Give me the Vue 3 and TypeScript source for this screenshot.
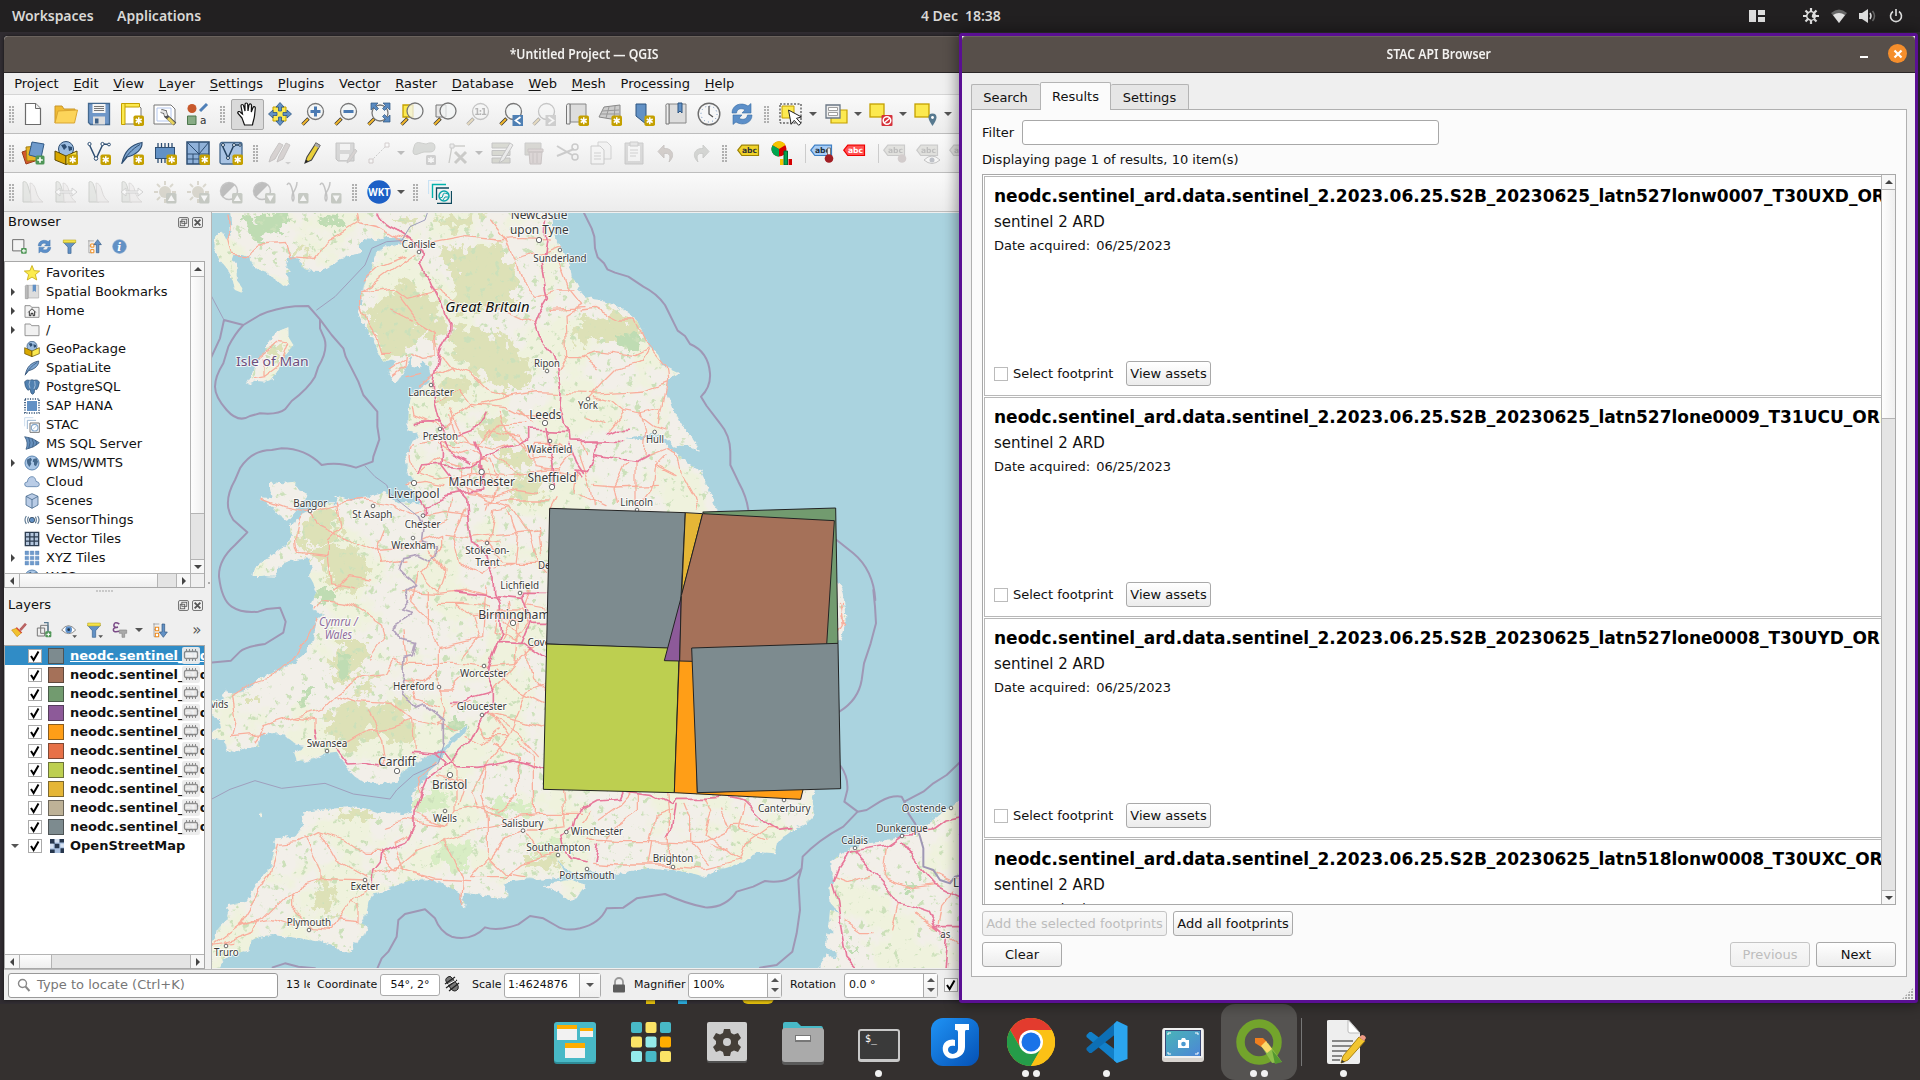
<script setup lang="ts">
interface Tool { k: 'icon' | 'handle' | 'arrow' | 'sep'; n?: string; off?: boolean; on?: boolean }
interface Place { t: string; x: number; y: number; w: number; s?: number; cx?: number; cy?: number; big?: boolean; cls?: string }

const star = '<rect x="13.5" y="13.500" width="10.500" height="10.500" rx="1.800" fill="#c4a000"/><path d="M18.750 15.300v7M15.700 17l6 3.500M21.700 17l-6 3.500" stroke="#fff" stroke-width="1.500"/>'
const lens = (x: number, y: number): string => `<path d="M1.500 22.500l6-6" stroke="#333" stroke-width="3.400"/><path d="M1.500 22.500l5.500-5.500" stroke="#f3b82c" stroke-width="2"/><circle cx="${x}" cy="${y}" r="8" fill="#f3f5f6" fill-opacity=".75" stroke="#777" stroke-width="1.300"/>`
const swirl = '<path d="M2 11C2 3 11-.5 18 4l3-2.500V11h-9l3-3.200C11 5.500 7 7 6.500 11z" fill="#5c8fc9" stroke="#3a6ea5" stroke-width=".6"/><path d="M22 13c0 8-9 11.500-16 7l-3 2.500V13h9l-3 3.200c4 2.300 8 .8 8.500-3.200z" fill="#5c8fc9" stroke="#3a6ea5" stroke-width=".6"/>'
const feather = '<path d="M2 22C4 12 9 4 22 1.500c.5 6-5 12-15 14.500z" fill="#7da5d0" stroke="#2e4e72" stroke-width="1.200"/><path d="M1.500 23C6 15 12 8 20 3.500" stroke="#2e4e72" fill="none"/>'
const geopkg = '<circle cx="12" cy="8" r="7.500" fill="#9bbce0" stroke="#2e4e72"/><path d="M7 4l4-1 2 3-3 3zM14 5l4 1v3l-3 1z" fill="#2e4e72"/><path d="M1 10l11 5v8.500L1 19z" fill="#d9a800" stroke="#5e4a00"/><path d="M23 10l-11 5v8.500L23 19z" fill="#fce94f" stroke="#5e4a00"/>'
const globe = '<circle cx="12" cy="12" r="10.500" fill="#a9c6e6" stroke="#4b78a8" stroke-width="1.300"/><path d="M4 7l6-3 2 3-2 3 1 3-3 5-3-5zM14 6l5-1 2 5-3 7-3-2v-4l-2-1z" fill="#45688c"/>'
const page = '<path d="M4.500 1.500h10l5 5v16h-15z" fill="#fff" stroke="#6b6b6b" stroke-width="1.200"/><path d="M14.500 1.500v5h5" fill="#eee" stroke="#6b6b6b"/>'
const pencil = '<path d="M4 22l2-6L15 2l4 2.500L10.500 19z" fill="#e9cf3a" stroke="#444" stroke-width="1.100"/><path d="M15 2l4 2.500-1.500 2.500-4-2.500z" fill="#aaa"/><path d="M4 22l1-3.300 2.500 1.500z" fill="#222"/>'
const hist = '<path d="M2 22V2q3-2 5 4l4 14 1 2z" fill="#ccd4c8" stroke="#8f9989"/><path d="M9 3q4 0 6 8t7 11H10z" fill="#e9e4e2" stroke="#b9b0ae"/>'
const mag = (up: boolean): string => `<rect x="13" y="13" width="10.500" height="10.500" rx="1.500" fill="#7b8d6d"/><path d="${up ? 'M18.250 15l3.500 6h-7z' : 'M18.250 21.500l3.500-6h-7z'}" fill="#fff"/>`
const tag = (f: string, s: string, c: string): string => `<path d="M.8 9.200l4-5h16.700v10.300H4.800z" fill="${f}" stroke="${s}" stroke-width="1.200"/><text x="5" y="12.300" font-family="DejaVu Sans" font-weight="bold" font-size="7.800" textLength="15" lengthAdjust="spacingAndGlyphs" fill="${c}">abc</text>`
const squareFlag = '<rect x="1" y="2" width="14" height="13" fill="#fce94f" stroke="#c4a000" stroke-width="1.300"/>'

const icons: Record<string, string> = {
  new: page,
  open: '<path d="M1 21V4h7l2 3h11v3" fill="#f0bb33" stroke="#c8962a"/><path d="M1 21L4 9l19.500-1-3 13z" fill="#fcd45a" stroke="#d9a531"/>',
  save: '<path d="M1.500 1.500h21v21h-19l-2-2z" fill="#6f97c8" stroke="#44698f" stroke-width="1.300"/><path d="M5.500 2h13v9h-13z" fill="#f4f4f4"/><path d="M7 4.500h10M7 6.500h10M7 8.500h10" stroke="#777"/><path d="M6 14.500h12v8H6z" fill="#dedede"/><path d="M8 16.500h3.500v5H8z" fill="#3c5f86"/>',
  layout: '<path d="M2 2h15l4 4v16H2z" fill="#fff" stroke="#777"/><path d="M5 1.500v21H1.500v-21h18v3.500H5" fill="#fce94f" stroke="#c4a000"/>' + star,
  manager: '<path d="M1 3h17l4 4v15H1z" fill="#fff" stroke="#777"/><path d="M4 6h14v13H4z" fill="none" stroke="#b4c7ee"/><path d="M8 9l4 1 1 4 9 8" stroke="#555" stroke-width="4" fill="none"/><path d="M8 9l4 1 1 4" stroke="#e6e6e6" stroke-width="2.600" fill="none"/><path d="M15 16l6 6" stroke="#e6d25f" stroke-width="3"/>',
  style: '<circle cx="6" cy="6.500" r="4.500" fill="#c8592c"/><path d="M14 9l7-7" stroke="#5080b8" stroke-width="3"/><path d="M1.500 14h8.500v8.500H1.500z" fill="#88ac86" stroke="#4c774c"/><text x="14" y="22" font-family="DejaVu Sans" font-size="10.500" fill="#333">a</text>',
  hand: '<path d="M7 16L3 11.500c-1-2 1.500-2.700 2.700-1L7.500 12 6 4c0-2 2.300-2 2.700 0L10 9V2.500c0-2 2.500-2 2.700 0L13 9l1-6c.3-1.800 2.500-1.500 2.500.3L16.300 10l1.700-4.500c.6-1.600 2.500-1 2.300.7L19.500 14c-.5 4-1.500 5-2 9H9.500z" fill="#fff" stroke="#111" stroke-width="1.200"/>',
  pan: '<path d="M5 5h13v14H5z" fill="#fce94f" stroke="#c4a000"/><path d="M12 .5l4 4.500h-2.500v4h-3V5H8zM12 23.500l4-4.500h-2.500v-4h-3v4H8zM.5 12L5 8v2.500h4v3H5V16zM23.500 12L19 8v2.500h-4v3h4V16z" fill="#6291c5" stroke="#2d5580" stroke-width=".8"/>',
  zin: lens(14.5, 9.5) + '<path d="M14.500 4.500v10M9.500 9.500h10" stroke="#4a7ab3" stroke-width="3"/>',
  zout: lens(14.5, 9.5) + '<path d="M9.500 9.500h10" stroke="#4a7ab3" stroke-width="3"/>',
  zfull: lens(13, 11) + '<path d="M4 1h7L8.500 3.500l3 3-2 2-3-3L4 8zM23 1h-7l2.500 2.500-3 3 2 2 3-3L23 8zM23 20h-7l2.500-2.500-3-3 2-2 3 3L23 13z" fill="#5a8ac0" stroke="#2d5580" stroke-width=".7"/>',
  zsel: '<path d="M3 3h10v12H3z" fill="#fce94f" stroke="#c4a000" stroke-width="1.300"/>' + lens(15, 9),
  zlay: '<path d="M3 3h10v12H3z" fill="#e8e8e8" stroke="#777"/>' + lens(15, 9),
  z11: lens(14.5, 9.5) + '<text x="8.300" y="13" font-family="DejaVu Sans" font-weight="bold" font-size="8.500" textLength="12.500" fill="#555">1:1</text>',
  zlast: lens(14.5, 9.5) + '<rect x="13.500" y="13" width="10.500" height="11" fill="#4f80b4"/><path d="M21.500 15l-5 3.500 5 3.500" stroke="#fff" stroke-width="1.700" fill="none"/>',
  znext: lens(14.5, 9.5) + '<rect x="13.500" y="13" width="10.500" height="11" fill="#999"/><path d="M16.500 15l5 3.500-5 3.500" stroke="#fff" stroke-width="1.700" fill="none"/>',
  newmap: '<path d="M5 2h16v18H5z" fill="#ddd" stroke="#888"/><path d="M5 2Q1 1 1.500 5v17H5z" fill="#eee" stroke="#777"/>' + star,
  new3d: '<path d="M1 15L6 5l16-2v13l-9 1z" fill="#ccc" stroke="#888"/><path d="M4 9l17-1M3 12l18 0M11 5l-3 11M17 4l-1 13" stroke="#999" fill="none"/>' + star,
  newbm: '<path d="M5 2h10v20l-5-4-5-4z" fill="#6291c5" stroke="#2d5580"/>' + star,
  showbm: '<path d="M5 2h17v19H5z" fill="#ddd" stroke="#888"/><path d="M5 2Q1 1 2 5v17H5z" fill="#eee" stroke="#777"/><path d="M14 1h4v10l-2-2-2 2z" fill="#6291c5" stroke="#2d5580"/>',
  clock: '<circle cx="12" cy="12" r="10.800" fill="#f7f7f7" stroke="#6d6d6d" stroke-width="1.400"/><circle cx="12" cy="12" r="8" fill="none" stroke="#6a8fbd" stroke-dasharray="1 3.200"/><path d="M12 4v8l4 3" stroke="#555" stroke-width="1.300" fill="none"/>',
  refresh: swirl,
  select: '<path d="M1 2h21v19H1z" fill="none" stroke="#222" stroke-dasharray="2 1.500"/><path d="M3 4h12v12H3z" fill="#fce94f" stroke="#c4a000"/><path d="M9.500 8l13 7-5 1.300 4.500 5-2.300 2-4.500-5-3 4z" fill="#fff" stroke="#222"/>',
  selval: '<path d="M7 8h16v13H7z" fill="#fce94f" stroke="#c4a000" stroke-width="1.200"/><path d="M2 3h14v13H2z" fill="#eee" stroke="#6b7785" stroke-width="1.300"/><path d="M4.500 5.500h9v3h-9zM4.500 10.500h9v3h-9z" fill="#fff" stroke="#888" stroke-width=".8"/>',
  desel: squareFlag + '<rect x="12.500" y="13" width="11" height="11" rx="1" fill="#d5313a"/><circle cx="18" cy="18.500" r="3.800" fill="none" stroke="#fff" stroke-width="1.500"/><path d="M15 21l6-5" stroke="#fff" stroke-width="1.500"/>',
  selloc: squareFlag + '<path d="M18.500 24q-4-6-4-8.500a4 4 0 018 0q0 2.500-4 8.500z" fill="#57798f"/><circle cx="18.500" cy="15.500" r="1.400" fill="#fff"/>',
  dsm: '<path d="M1 11l12-4 4 12-12 4z" fill="#d4582c" stroke="#9b3d1b"/><path d="M5 6l14-1v14l-13 1z" fill="#e8b427" stroke="#a27f12"/><path d="M11 1l12 2-3 14-12-3z" fill="#6f9acb" stroke="#315a87"/><rect x="14.500" y="14.500" width="9" height="9" rx="1.500" fill="#4f9657"/><path d="M19 16.300v5.500M16.300 19h5.500" stroke="#fff" stroke-width="1.600"/>',
  gpkg: geopkg + star,
  shp: '<path d="M2 3L9 18 16 3l6 .5" fill="none" stroke="#2e4e72" stroke-width="1.500"/><g fill="#fff" stroke="#2e4e72"><circle cx="2.500" cy="3" r="1.600"/><circle cx="9" cy="17.500" r="1.800"/><circle cx="15.500" cy="3" r="1.600"/><circle cx="22" cy="3.500" r="1.400"/></g>' + star,
  feather: feather + star,
  chip: '<path d="M5 2v20M8.500 2v20M12 2v20M15.500 2v20M19 2v20" stroke="#2e4e72" stroke-width="1.300"/><rect x="2.500" y="6.500" width="19" height="11" fill="#6291c5" stroke="#2e4e72"/>' + star,
  mesh: '<path d="M1 1h22v22H1z" fill="#8fb1d9" stroke="#2e4e72" stroke-width="1.500"/><path d="M1 13h22M13 1v22M1 1l12 12L23 1M7 13v10M1 18h12" stroke="#2e4e72" fill="none"/>' + star,
  vl: '<rect x="1" y="1.500" width="22" height="21.500" rx="2" fill="#a9c4e4" stroke="#45688c" stroke-width="1.300"/><path d="M3 4l6 13 6-13h6" fill="none" stroke="#23415f" stroke-width="1.500"/><g fill="#fff" stroke="#23415f"><circle cx="4" cy="4" r="1.500"/><circle cx="9" cy="17" r="1.500"/><circle cx="15" cy="4" r="1.500"/><circle cx="21" cy="4" r="1.300"/></g>' + star,
  pencils: '<path d="M1 21l2-6 8-13 4 2-8 14zM9 21l2-6 7-13 4 2-7 14z" fill="#b39c98" stroke="#847471"/><path d="M17 21h6l-3 2.500z" fill="#999"/>',
  pencil,
  savee: '<path d="M2 2h18v18H4l-2-2z" fill="#aaa" stroke="#777"/><path d="M6 3h10v6H6zM6 13h9v6H6z" fill="#eee"/><path d="M13 22l1-4 7-10 2 2-7 10z" fill="#b39c98" stroke="#888"/>',
  digit: '<path d="M4 20L20 4" stroke="#888" stroke-dasharray="2 1.500"/><path d="M2 18h4v4H2zM18 2h4v4h-4z" fill="#fff" stroke="#a88"/>',
  blob: '<path d="M2 6Q3 0 9 2t8 0q6-1 6 4t-5 5-6 0-6 2-5-3z" fill="#aab3a5" stroke="#8a9186"/><rect x="14" y="14" width="10" height="10" rx="1.500" fill="#999"/><path d="M19 16v6M16 17.500l6 3M22 17.500l-6 3" stroke="#fff" stroke-width="1.400"/>',
  vertex: '<path d="M4 22l3-17h13" fill="none" stroke="#8c8c80" stroke-width="1.300"/><path d="M5 3h4v4H5z" fill="#ddd" stroke="#888"/><path d="M10 11l11 11M21 11L10 22" stroke="#8c8c80" stroke-width="3"/>',
  attr: '<path d="M2 2h18v5H2zM2 9.500h18v5H2zM2 17h18v5H2z" fill="#aab08c" stroke="#777"/><path d="M9 22l2-5L20 2l3 2-9 15z" fill="#ddd" stroke="#777"/>',
  trash: '<path d="M2 2h16v12H2z" fill="#aaa890" stroke="#888"/><path d="M5 8h15v3H5zM6 11h13l-1 12H7z" fill="#c4a5a5" stroke="#947777"/><path d="M10 12v10M14 12v10" stroke="#947777"/>',
  cut: '<path d="M1 5l15 9M1 15l17-7" stroke="#8d8d8d" stroke-width="2"/><circle cx="19" cy="6" r="3" fill="none" stroke="#888" stroke-width="1.500"/><circle cx="19" cy="16" r="3" fill="none" stroke="#888" stroke-width="1.500"/>',
  copy: '<path d="M9 1h9l4 4v13H9z" fill="#eee" stroke="#999"/><path d="M2 5h9l4 4v14H2z" fill="#f6f6f6" stroke="#888"/><path d="M5 12h7M5 15h7M5 18h7" stroke="#999"/>',
  paste: '<path d="M3 2h18v21H3z" fill="#b0b0b0" stroke="#888"/><path d="M6 5h12v15H6z" fill="#f5f5f5"/><path d="M8 1h8v4H8z" fill="#ccc" stroke="#888"/><path d="M8 9h8M8 12h8M8 15h6" stroke="#999"/>',
  undo: '<path d="M9 4L3 10.500 9 17v-4.500c6-1 7 3 5 8.500 7-7 3-14-5-13.500z" fill="#a98f81" stroke="#8f7a70"/>',
  redo: '<path d="M15 4l6 6.500-6 6.500v-4.500c-6-1-7 3-5 8.500C3 14 7 7 15 7.500z" fill="#9fa59a" stroke="#888e85"/>',
  abc: tag('#f0d32a', '#9d8200', '#333'),
  abcr: tag('#ff5252', '#e00', '#fff'),
  abcg: tag('#c4c4b4', '#888', '#666'),
  abcb: tag('#a7cdf7', '#3d7fc4', '#234') + '<path d="M17.500 7h3v8h-3z" fill="#eee" stroke="#777"/><circle cx="19" cy="17.500" r="4.300" fill="#a11e24"/>',
  abcp: tag('#c4c4b4', '#888', '#666') + '<circle cx="19" cy="17.500" r="4.300" fill="#b09090"/>',
  abce: tag('#c4c4b4', '#888', '#666') + '<path d="M8 19q8-8 16 0-8 7-16 0z" fill="#fff" stroke="#777"/><circle cx="16" cy="19" r="2.500" fill="#679"/>',
  diag: '<circle cx="9" cy="8" r="7.500" fill="#d40000"/><path d="M9 8L2.500 4.200A7.500 7.500 0 0115.500 4z" fill="#f5c400"/><path d="M9 8v7.500A7.500 7.500 0 012.500 4.200z" fill="#00a650"/><path d="M10 18h3.500v6H10z" fill="#f5c400"/><path d="M14 10h3.500v14H14z" fill="#00a650" stroke="#063"/><path d="M18.500 18H22v6h-3.500z" fill="#d40000"/>',
  hist,
  hist2: hist + '<path d="M1 12l5-4v3h12V8l5 4-5 4v-3H6v3z" fill="#fff" stroke="#999"/>',
  sunu: '<circle cx="12" cy="12" r="6" fill="#b3a877"/><path d="M12 1v4M12 19v4M1 12h4M19 12h4M4 4l3 3M17 7l3-3M4 20l3-3" stroke="#b3a877" stroke-width="2"/>' + mag(true),
  sund: '<circle cx="12" cy="12" r="6" fill="#b3a877"/><path d="M12 1v4M12 19v4M1 12h4M19 12h4M4 4l3 3M17 7l3-3M4 20l3-3" stroke="#b3a877" stroke-width="2"/>' + mag(false),
  conu: '<circle cx="10" cy="11" r="8.500" fill="#eee" stroke="#777" stroke-width="1.500"/><path d="M4 17A8.500 8.500 0 0116 5z" fill="#666"/>' + mag(true),
  cond: '<circle cx="10" cy="11" r="8.500" fill="#eee" stroke="#777" stroke-width="1.500"/><path d="M4 17A8.500 8.500 0 0116 5z" fill="#666"/>' + mag(false),
  gamu: '<path d="M2 5q3-6 6 8 4-6 4-11M8 12q-2 7 0 9 2-2 0-9" fill="none" stroke="#777" stroke-width="1.500"/>' + mag(true),
  gamd: '<path d="M2 5q3-6 6 8 4-6 4-11M8 12q-2 7 0 9 2-2 0-9" fill="none" stroke="#777" stroke-width="1.500"/>' + mag(false),
  wkt: '<circle cx="12" cy="12" r="11.700" fill="#1c5fc6"/><text x="1.300" y="16" font-family="Open Sans" font-weight="bold" font-size="11" textLength="21.500" lengthAdjust="spacingAndGlyphs" fill="#fff">WKT</text>',
  stac: '<path d="M.5 14V.5H14" fill="none" stroke="#c9e2f4" stroke-width="1.200"/><path d="M4.500 18V4.500H18" fill="none" stroke="#00b2ac" stroke-width="1.400"/><path d="M8.500 20V8H21M9 23.500h14.500V11" fill="none" stroke="#0e4a5e" stroke-width="1.300"/><circle cx="16" cy="16" r="5" fill="none" stroke="#09a5a8" stroke-width="1.500"/><path d="M12 18q3 0 3-3t5-1M15 20l2-3h3" stroke="#09a5a8" fill="none"/>',
  addl: '<path d="M1 1h18v18H1z" fill="#f3f3f3" stroke="#666" stroke-width="1.500"/><rect x="14.500" y="14.500" width="9" height="9" rx="1.500" fill="#4f9657"/><path d="M19 16v6M16 19h6" stroke="#fff" stroke-width="1.700"/>',
  filter: '<path d="M2 5h20l-7.500 8v10h-5V13z" fill="#6291c5" stroke="#3a628e"/><path d="M2 1.500h20V6H2z" fill="#f5e34a" stroke="#b5a11b" stroke-width=".8"/>',
  collapse: '<path d="M2 3h9M3 2v20h5M3 11h5" stroke="#888" fill="none"/><path d="M6 8h5v5H6zM6 17h5v5H6z" fill="#fff" stroke="#ef8b1b" stroke-width="1.600"/><path d="M17 1l6 8h-4v13h-4V9h-4z" fill="#6291c5" stroke="#2d5580"/>',
  expand: '<path d="M2 3h9M3 2v20h5M3 11h5" stroke="#888" fill="none"/><path d="M5 8h5v5H5zM5 17h5v5H5z" fill="#fff" stroke="#ef8b1b" stroke-width="1.600"/><path d="M17 23l6-8h-4V3h-4v12h-4z" fill="#6291c5" stroke="#2d5580"/>',
  info: '<circle cx="12" cy="12" r="11" fill="#6291c5" stroke="#7da2cc"/><text x="8.500" y="18.500" font-family="DejaVu Serif" font-style="italic" font-weight="bold" font-size="17" fill="#fff">i</text>',
  brush: '<path d="M13 11l8-9 2 2-8 9z" fill="#b66" stroke="#a44"/><path d="M9 9l7 7-7 6L1 12z" fill="#f2c230" stroke="#c98f17"/><path d="M9 8l8 8-2 1-8-8z" fill="#d64c3b"/>',
  group: '<path d="M2 9h11v12H2zM7 5h11v12H7z" fill="none" stroke="#777" stroke-width="1.500"/><path d="M12 1h6v17" fill="none" stroke="#57798f" stroke-width="2"/><rect x="14" y="14" width="9" height="9" rx="1.500" fill="#4f9657"/><path d="M18.500 16v5.500M15.700 18.500h5.500" stroke="#fff" stroke-width="1.500"/>',
  eye: '<path d="M1 12q10-13 21 0-10 11-21 0z" fill="#fff" stroke="#777" stroke-width="1.300"/><circle cx="11.500" cy="11.500" r="5" fill="#5c8fc9"/><circle cx="11.500" cy="11.500" r="2" fill="#234"/><path d="M17 20h7l-3.500 4z" fill="#555"/>',
  filterd: '<path d="M1 5h19l-7 8v10H8V13z" fill="#6291c5" stroke="#3a628e"/><path d="M1 1.500h19V6H1z" fill="#f5e34a" stroke="#b5a11b" stroke-width=".8"/><path d="M17 20h7l-3.500 4z" fill="#555"/>',
  eps: '<path d="M11 3Q4-1 3 4t6 4Q2 8 2 12t9 2" fill="none" stroke="#7a4a86" stroke-width="2.300"/><path d="M11 12h11v5h-3v6h-4v-6h-4z" fill="#aaa" stroke="#888"/>',
  starf: '<path d="M12 .8l3.200 7.700 8.300.6-6.400 5.300 2 8.100-7.100-4.400-7.100 4.400 2-8.100L.5 9.100l8.300-.6z" fill="#fcec4d" stroke="#c9ad12" stroke-width="1.300"/>',
  bm: '<path d="M6 2h16v19H6z" fill="#ddd" stroke="#aaa"/><path d="M6 2Q1 1 2 5v17h4z" fill="#bbb" stroke="#999"/><path d="M13 1h5v11l-2.500-2L13 12z" fill="#6291c5"/>',
  home: '<path d="M1.500 21.500V4h8l2 2.500h11v15z" fill="#f3f3f3" stroke="#777" stroke-width="1.200"/><path d="M6.500 14L12 8.500l5.500 5.500M8 13v6h2.500v-3.500h3V19H16v-6" fill="none" stroke="#222" stroke-width="1.400"/>',
  folder: '<path d="M1.500 20.500V3h8l2 2.500h11v15z" fill="#f1f1f1" stroke="#888" stroke-width="1.300"/>',
  gpk: geopkg, spl: feather, globe,
  pg: '<path d="M1 4q3-4 8-2 3-2 6 0 6-2 8 3-1 8-4 11l-3-1q0 8-3 8t-4-8q-3 3-4 1Q1 12 1 4z" fill="#5080b0" stroke="#2e4e72"/><path d="M9 2q-3 6 0 12M16 3q2 7-1 12" fill="none" stroke="#c8d8ea"/>',
  hana: '<path d="M1.500 1.500h21v21h-21z" fill="none" stroke="#2e4e72" stroke-width="2.500" stroke-dasharray="1.700 2"/><path d="M4.500 4.500h15v15h-15z" fill="#6291c5"/>',
  stc: '<path d="M1 14V1h13" fill="none" stroke="#cde" stroke-width="1.500"/><path d="M5 18V5h13" fill="none" stroke="#9ab5d0" stroke-width="1.500"/><path d="M9 9h14v14H9z" fill="none" stroke="#777" stroke-width="1.500"/><circle cx="16" cy="16" r="5" fill="none" stroke="#87a9cc" stroke-width="1.700"/><path d="M13 19l6-6" stroke="#87a9cc"/>',
  ms: '<path d="M1 1q12 1 22 9-7 7-20 10Q7 10 1 1z" fill="#6690bd" stroke="#2e4e72"/><path d="M7 2q4 8 0 17M12 4q4 6 1 13M17 6q3 4 1 8" fill="none" stroke="#2e4e72"/>',
  cloud: '<path d="M5 19q-4 0-4-4 0-3 4-3 1-8 7-8 5 0 6 7 5 1 5 4.500T19 19z" fill="#b9cce6" stroke="#5b7fa8" stroke-width="1.200"/>',
  cube: '<path d="M12 1l9 4v13l-9 5-9-5V5z" fill="#b9cce6" stroke="#45688c" stroke-width="1.200"/><path d="M3 5l9 5 9-5M12 10v13" fill="none" stroke="#45688c" stroke-width="1.200"/>',
  sensor: '<circle cx="12" cy="12" r="4" fill="#6291c5" stroke="#234"/><path d="M7 7q-3 5 0 10M3.500 6q-4 6 0 12M17 7q3 5 0 10M20.500 6q4 6 0 12" fill="none" stroke="#5b7791" stroke-width="1.700"/>',
  vt: '<path d="M2 2h20v20H2z" fill="#b4c6dd" stroke="#2e3e52" stroke-width="2"/><path d="M2 8.700h20M2 15.300h20M8.700 2v20M15.300 2v20" stroke="#2e3e52" stroke-width="2"/>',
  xyz: '<path d="M1.500 1.500h5.500V7H1.500zM9.300 1.500h5.500V7H9.300zM17 1.500h5.500V7H17zM1.500 9.300H7v5.500H1.500zM9.300 9.300h5.500v5.500H9.300zM17 9.300h5.500v5.500H17zM1.500 17H7v5.500H1.500zM9.300 17h5.500v5.500H9.300zM17 17h5.500v5.500H17z" fill="#6f9acb" stroke="#5383b8" stroke-width=".5"/>',
}

const I = (...n: string[]): Tool[] => n.map(x => ({ k: 'icon' as const, n: x }))
const D = (...n: string[]): Tool[] => n.map(x => ({ k: 'icon' as const, n: x, off: true }))
const H: Tool = { k: 'handle' }
const A: Tool = { k: 'arrow' }
const AD: Tool = { k: 'arrow', off: true }
const S: Tool = { k: 'sep' }
const toolbars: Tool[][] = [
  [H, ...I('new', 'open', 'save', 'layout', 'manager', 'style'), H, { k: 'icon', n: 'hand', on: true }, ...I('pan', 'zin', 'zout', 'zfull', 'zsel', 'zlay'), ...D('z11'), ...I('zlast'), ...D('znext'), ...I('newmap', 'new3d', 'newbm', 'showbm', 'clock', 'refresh'), H, ...I('select'), A, ...I('selval'), A, ...I('desel'), A, ...I('selloc'), A],
  [H, ...I('dsm', 'gpkg', 'shp', 'feather', 'chip', 'mesh', 'vl'), H, ...D('pencils'), ...I('pencil'), ...D('savee', 'digit'), AD, ...D('blob', 'vertex'), AD, ...D('attr', 'trash', 'cut', 'copy', 'paste', 'undo', 'redo'), H, ...I('abc', 'diag'), S, ...I('abcb', 'abcr'), S, ...D('abcp', 'abce', 'abcg')],
  [H, ...D('hist', 'hist2', 'hist', 'hist2', 'sunu', 'sund', 'conu', 'cond', 'gamu', 'gamd'), H, ...I('wkt'), A, H, ...I('stac')],
]

const menus: [string, string, string][] = [['Pro', 'j', 'ect'], ['', 'E', 'dit'], ['', 'V', 'iew'], ['', 'L', 'ayer'], ['', 'S', 'ettings'], ['', 'P', 'lugins'], ['Vect', 'o', 'r'], ['', 'R', 'aster'], ['', 'D', 'atabase'], ['', 'W', 'eb'], ['', 'M', 'esh'], ['Pro', 'c', 'essing'], ['', 'H', 'elp']]

const tree: { t: string; i: string; e?: boolean }[] = [
  { t: 'Favorites', i: 'starf' }, { t: 'Spatial Bookmarks', i: 'bm', e: true }, { t: 'Home', i: 'home', e: true }, { t: '/', i: 'folder', e: true },
  { t: 'GeoPackage', i: 'gpk' }, { t: 'SpatiaLite', i: 'spl' }, { t: 'PostgreSQL', i: 'pg' }, { t: 'SAP HANA', i: 'hana' }, { t: 'STAC', i: 'stc' },
  { t: 'MS SQL Server', i: 'ms' }, { t: 'WMS/WMTS', i: 'globe', e: true }, { t: 'Cloud', i: 'cloud' }, { t: 'Scenes', i: 'cube' },
  { t: 'SensorThings', i: 'sensor' }, { t: 'Vector Tiles', i: 'vt' }, { t: 'XYZ Tiles', i: 'xyz', e: true }, { t: 'WCS', i: 'globe' },
]
const layers = ['#7d8b8f', '#a57159', '#729b6f', '#8d5a99', '#ff9e17', '#e77148', '#bdcf50', '#e5b636', '#beb297', '#7d8b8f']

const results = ['latn527lonw0007_T30UXD', 'latn527lone0009_T31UCU', 'latn527lone0008_T30UYD', 'latn518lonw0008_T30UXC']

const land = [
  'M75 0L80 60 65 90 50 65 30 80 28 115 45 150 70 180 85 215 90 240 110 248 112 235 95 210 95 170 80 150 85 135 110 135 130 140 145 165 165 180 185 185 200 200 215 210 235 228 250 222 250 205 245 190 255 180 240 160 250 140 265 140 285 148 290 175 320 182 350 183 380 165 400 150 440 135 465 130 465 100 480 85 520 88 545 80 585 85 600 88 600 98 580 105 545 110 515 125 505 145 500 180 480 220 468 245 470 285 455 305 470 335 490 365 510 395 520 430 535 455 560 448 575 455 555 475 550 490 570 522 580 510 600 480 615 440 620 450 620 470 640 475 655 455 675 475 680 500 670 520 640 540 620 555 612 590 610 660 635 670 640 680 620 700 600 740 610 785 625 810 605 822 620 840 640 868 652 880 610 880 580 880 550 860 540 845 480 862 440 870 415 865 390 855 400 880 360 880 320 900 290 915 275 935 255 945 258 990 230 1015 180 1050 150 1075 145 1098 180 1098 210 1100 215 1080 240 1060 270 1050 310 1045 315 1060 325 1075 312 1095 325 1120 335 1145 325 1165 318 1180 335 1212 360 1210 335 1230 325 1290 300 1330 270 1355 230 1375 190 1395 160 1405 140 1430 105 1445 80 1452 60 1442 52 1460 60 1475 15 1470 15 1515 45 1525 48 1555 25 1565 15 1580 60 1590 62 1618 95 1628 120 1615 160 1610 160 1590 165 1575 190 1570 235 1570 250 1585 270 1600 300 1605 290 1620 268 1630 275 1650 300 1655 330 1645 360 1630 395 1625 410 1645 430 1680 450 1700 475 1715 530 1723 575 1715 595 1685 625 1660 670 1640 700 1620 720 1610 735 1585 760 1565 785 1545 790 1550 780 1570 750 1595 725 1620 715 1640 700 1660 670 1685 665 1710 635 1730 622 1750 620 1805 595 1812 560 1810 520 1808 480 1795 430 1792 360 1798 300 1805 290 1820 295 1850 270 1880 210 1885 205 1930 200 1970 175 2000 150 2030 125 2075 72 2085 65 2130 35 2160 30 2185 15 2205 15 2275 45 2273 55 2245 95 2230 130 2220 140 2190 165 2180 200 2175 250 2180 290 2185 310 2190 345 2195 385 2205 405 2225 440 2228 445 2200 480 2175 490 2150 468 2140 485 2110 490 2075 505 2050 530 2045 570 2025 620 2010 680 2008 730 2030 765 2050 775 2095 782 2085 772 2065 775 2048 830 2055 880 2065 910 2065 910 2045 895 2025 920 2010 975 2005 1000 2010 1045 2005 1085 1995 1050 1940 1075 1968 1120 2000 1145 1980 1175 1990 1215 1995 1245 1990 1295 1980 1355 1975 1405 1980 1455 1988 1505 2002 1525 1985 1575 1970 1625 1950 1655 1925 1710 1930 1715 1900 1735 1880 1775 1855 1805 1840 1825 1820 1825 1790 1820 1760 1835 1740 1800 1600 1895 1305 1910 1280 1922 1235 1917 1170 1910 1140 1900 1120 1820 1060 1600 950 1535 900 1520 860 1495 800 1485 780 1455 765 1430 740 1395 715 1370 690 1350 682 1300 690 1260 684 1300 678 1345 672 1375 680 1410 710 1455 710 1482 725 1470 700 1435 650 1400 590 1385 545 1387 510 1420 490 1395 478 1370 465 1360 435 1330 405 1315 370 1295 330 1255 300 1205 275 1165 270 1130 250 1115 220 1100 200 1095 165 1075 130 1050 80 1040 30 1030 0z',
  'M195 815L230 820 270 815 280 840 305 850 300 875 275 900 250 932 220 915 195 885 165 870 170 862 200 865 195 840z',
  'M250 352L250 380 265 405 240 435 220 480 195 510 180 515 150 512 125 522 145 490 155 455 175 430 200 385 215 365z',
  'M2270 1770L2225 1800 2170 1840 2090 1880 2025 1895 1975 1902 1915 1925 1875 1955 1880 1990 1890 2020 1873 2030 1877 2080 1905 2110 1875 2100 1870 2150 1890 2170 1867 2170 1863 2210 1900 2235 1890 2245 1865 2230 1840 2280 2270 2280z',
  'M1015 2030L1050 2015 1100 2010 1140 2025 1115 2065 1090 2070 1060 2045zM165 1808l6 0 0 14-6 0z',
].join('')

const hills = [
  'M715 110L800 120 880 100 905 150 935 190 930 260 890 300 840 290 790 310 740 270 760 200 710 160z',
  'M580 215L620 205 640 250 700 260 700 330 730 370 690 400 660 350 620 420 590 440 540 450 510 380 490 320 500 280 560 260z',
  'M745 345L830 360 900 380 940 430 990 480 960 540 900 540 850 500 800 480 760 450 740 400z',
  'M700 520L760 500 800 530 740 590 700 570zM830 620L900 610 910 670 860 700 820 670zM880 720L960 720 970 780 920 790zM915 800L1000 790 1010 850 960 880 910 850z',
  'M1140 320L1240 310 1310 350 1290 400 1180 390 1130 400 1090 390z',
  'M330 900L390 880 410 940 390 1000 300 1010 270 980zM300 1020L460 1000 450 1060 420 1120 350 1120 380 1080 310 1040zM390 1020L480 1040 500 1120 400 1150z',
  'M400 1290L480 1290 490 1350 430 1410 370 1400zM460 1400L520 1390 490 1450 440 1460zM370 1500L440 1480 600 1500 630 1590 560 1600 520 1560 470 1590 440 1620 350 1560z',
  'M570 1450L610 1460 625 1490 570 1500zM340 2010L385 2010 390 2100 360 2130 330 2090zM390 1805L500 1800 470 1830 400 1830zM960 1940L1040 1930 1080 1970 1020 1980 960 1970z',
  'M205 400L235 400 225 440 195 460zM250 130L295 115 295 145 260 150zM560 20L640 10 620 50 570 40zM690 20L850 10 780 60 720 50zM125 1465L165 1465 160 1485 130 1485z',
].join('')

const woods = [
  'M105 20L260 10 240 60 180 80 200 120 150 100 120 70zM350 30L420 20 410 55 350 50z',
  'M400 1320L450 1340 430 1400 390 1390zM290 1450L330 1435 320 1475 285 1480zM740 1525L765 1520 760 1565 735 1550zM340 1150L390 1130 390 1170 340 1190z',
  'M1250 380L1300 380 1310 400 1270 430 1240 400zM1930 2200l25 15 5 20-30-15zM2100 2020l30-10 20 15-40 15z',
].join('')
const fields = 'M850 1780L960 1770 990 1800 940 1815 860 1805zM640 1750L720 1740 730 1790 660 1800 630 1830zM690 1910L800 1900 780 1970 700 1960zM950 1900L1070 1890 1080 1910 980 1930z'

const motorways = [
  'M522 9Q530 35 570 55L605 78 625 92Q645 105 655 135L650 165 665 195 675 210 690 245Q712 285 716 310L735 345 733 375Q710 410 703 435L695 480 685 520 690 580 705 640 720 680 745 735 790 760M762 845L785 870 790 940 800 1000 840 1020 855 1080 870 1110 872 1150 885 1180 890 1270 865 1330 850 1370 845 1400 862 1435 862 1480 850 1510 820 1540 790 1600 755 1635 740 1655 700 1685 668 1710 655 1740 630 1810 630 1850 605 1900 525 1930 520 1960 500 1985 498 2030',
  'M1025 0Q1015 70 1020 90L1010 150 1025 240 1030 260 1000 310 988 340 1000 380 1040 430 1055 480 1068 540 1065 590 1078 640 1092 665 1095 690 1250 695M1095 690L1180 690M1205 668L1235 655 1270 655M1180 692L1180 720 1172 740 1235 750 1295 757 1330 738M1172 740L1150 785 1110 780 1130 800',
  'M628 640L700 638 720 650M765 670L820 650 840 610M968 660L968 690 920 710 850 740 800 770 780 770 700 760 650 765 638 790M968 660L1092 665M1020 650L1030 720 1040 750 1045 830M1092 700L1115 760 1135 790M710 695L708 765 735 800 760 840M660 890L720 860 830 840 830 770M810 690L825 740 825 790M640 860L655 890 655 918',
  'M750 1145L870 1160 950 1168 975 1240 950 1300 880 1298M950 1168L960 1150 1020 1150M975 1240L1025 1240M950 1298L1020 1345',
  'M330 1560L335 1590M395 1620L430 1665 480 1662 520 1670 545 1670M620 1630L690 1635 720 1620 740 1645 755 1670 820 1672 870 1665 925 1650 960 1660 1015 1680M690 1635L720 1660 715 1675',
  'M740 1480L770 1480 800 1455 855 1440M1140 1790Q1110 1810 1105 1850L1070 1880 1080 1920 1095 1945 1140 1955M1125 1800L1180 1770 1240 1765 1250 1740 1340 1750 1400 1780 1410 1765 1500 1765 1570 1760 1620 1770 1680 1830 1720 1855 1760 1850M1410 1780L1400 1855 1385 1880M1180 1905L1170 1955',
  'M1880 2020L1895 2070 1905 2150 1920 2245 1950 2275M1950 1920L1995 1970 2050 2040 2080 2080 2170 2110 2190 2150 2270 2150M1955 1920L2050 1905 2100 1870 2180 1860 2220 1830 2270 1820M2090 1895L2150 1975 2190 2020 2270 2060M2190 2150L2230 2185 2220 2275M1950 1920L1930 1925 1900 1970 1885 2010',
]

const roads = [
  'M75 15Q85 60 65 90L75 130 130 135 165 105 235 100 250 140 330 145 370 90 460 35 520 50 600 100M460 35L455 9M460 35L510 45 560 75 625 92M655 105L700 95 780 80 880 90 940 85 1030 90M470 245Q560 180 630 130M475 210L520 170 600 140M470 245L560 235 600 265 700 240 750 270 780 290M580 260L610 300 640 340 690 370 690 440 650 445 620 430M470 250L470 290 490 340 515 380 530 430 560 430',
  'M640 525L680 500 740 470 800 490 850 540 900 560 1000 545 1140 550M690 370L700 430 740 480M860 30L905 90 930 150 950 220 990 260 1060 240 1110 240M940 150L1010 130 1060 110M1035 295L1140 290M1060 150L1090 230 1130 280 1080 310 1085 440 1060 490M840 290L900 300 990 340M1080 440L1140 440 1180 470M690 580L760 540 800 590 900 560M720 650L800 580 900 590 960 620 1040 620',
  'M625 700Q600 760 640 790L700 740 760 760 780 830 850 870 920 890 970 960 1000 1060M640 700L700 690 760 710M625 590L630 620 700 650M740 600L770 660 800 700 870 720 950 700M870 740L940 790 1030 780 1120 800M850 680L880 640 960 640M600 830L660 820 720 830M640 790L700 810 760 800 840 790 900 800 960 790M800 760L860 750 880 800 850 830 800 810z',
  'M165 865L230 890 310 905 400 880 480 870 570 885 620 910 655 900M310 900L350 950 410 980 500 1020 620 1010 710 970M290 910Q260 980 280 1030L370 1040 380 1120 460 1140M370 1040L370 990 410 950 400 870M540 960L520 1010 530 1060 600 1050M655 920L720 910 790 920M710 970L710 1020 650 1090 700 1145M600 1145L700 1150 790 1140 860 1160M720 970L790 980 870 970 1000 960M845 990L900 1060 1000 1060 1030 1090M845 880L900 870 1030 870M740 870L730 930 650 960',
  'M330 1200L350 1170 420 1180 470 1200 530 1240 540 1290 500 1350M390 1140L430 1100 500 1110M330 1230Q290 1320 250 1360T160 1410L80 1460 90 1540 80 1580 180 1570M150 1590L180 1550 270 1520 330 1530 330 1570M270 1520L350 1500 400 1450 470 1400 540 1390 560 1350 610 1360M400 1455L450 1475 560 1480 620 1530 690 1545M490 1500L530 1590 540 1670M420 1600L490 1560 560 1550 620 1530 625 1620M600 1265L610 1360 740 1360 830 1370 930 1360M700 1310L700 1430 720 1500 700 1550M700 1310L830 1280',
  'M670 1140L670 1250 700 1310M600 1405L650 1415 700 1380M620 1400L640 1470 700 1490M840 1130L830 1280M860 1210L940 1230 930 1360 860 1440M930 1360L1000 1290M910 1180L920 1230 890 1290M900 1230L950 1280M880 1200L950 1200 970 1240 930 1290 870 1260zM850 1510L940 1570 1000 1640M740 1490L800 1470M820 1540L840 1580 910 1580M870 1380L920 1430 1020 1480M862 1510L910 1580 860 1640 800 1740M860 1510L1015 1550M910 1580L970 1440 1020 1420M800 1740L820 1800 870 1790',
  'M750 1640L750 1800 800 1790 900 1820 1000 1810 1130 1810M715 1890L800 1860 900 1840M630 1810L720 1850 750 1800M845 1670L830 1760 850 1820 850 1940 800 2000M940 1590L985 1640 985 1810M720 1885L750 1950 775 2010 770 2080M525 1930L570 1980 640 1920 720 1890M500 1990L580 1970 680 2010 800 2015M690 2005L600 1980 570 1900 610 1880M530 1850L600 1830 720 1850M340 1865L420 1890 480 1930 525 1930',
  'M300 1880L320 1930 345 1980 345 2010 280 2030 240 2060 180 2120 100 2150 20 2210M345 2005L480 2010M345 1870L390 1950 480 2000M220 1900L280 1895 340 1865M220 1900L200 1990 160 2050 100 2150M260 2050L260 2090 320 2150 380 2155 440 2070 480 2035M100 2145L200 2125 260 2145M55 2200L140 2170 160 2130M20 2210L80 2200M440 2070L465 2080 465 2135 400 2130',
  'M855 1950L900 1890 950 1865 970 1880 1010 1940M850 1940L900 1990 960 2000M800 2000L900 2000 950 1960 1060 1930M1070 1740L1080 1850 1010 1860 960 1860M1150 1890L1260 1895 1340 1895 1480 1900 1580 1850 1660 1845M1180 1830L1230 1795 1280 1740M1385 1740L1390 1800 1390 1960M1440 1780L1460 1830 1460 1900 1510 1960M1340 1895L1330 1960M1160 1960L1240 1965 1390 1965 1500 1975 1600 1950 1620 1900 1690 1850 1720 1850M1500 1765L1520 1810 1500 1870 1600 1950M1620 1770L1600 1860 1680 1890',
  'M1125 300L1170 295 1240 330 1290 330 1330 410 1380 470 1385 510 1370 600 1360 640M1125 440L1180 425 1290 440 1330 420M1150 565L1200 510 1230 480 1310 460 1330 425M1150 550L1250 545 1320 540 1385 515M1165 560L1220 575 1255 605 1310 615 1370 600M1310 610L1325 660 1320 740M1255 605L1210 660M1310 620L1350 650 1380 660M1330 740L1380 720 1420 740 1430 800 1470 870 1480 900M1170 820L1230 825 1360 820M1290 760L1290 890M1265 760L1230 830 1240 880M1350 760L1340 830 1295 890M1380 740L1350 770 1410 800M1125 855L1200 890M1125 740L1160 840 1165 890M1900 1180L1912 1240 1900 1260M1910 1180L1905 1220 1920 1240',
  'M1890 2000L1930 2015 2000 1995M1920 2130L1970 2165 2010 2165M2050 1910L2040 2000 2120 2030 2200 2020M2180 1980L2240 2010 2270 2000M2250 2040L2210 2090 2200 2140M2120 2110L2170 2140 2260 2200M2080 2080L2060 2160',
  'M165 440L215 400 245 405 220 470 180 500 150 505M180 440L180 500M555 480L600 450M605 430L600 470 560 500M660 1000L720 1080 700 1140M850 1000L870 900 920 890M1000 950L1010 1040',
  'M740 620L760 690 820 700 860 660 940 680 980 740 1040 740M700 700L760 730 800 720 850 760M880 600L900 660 960 720M770 800L790 850 870 860 930 840 1000 850M850 780L870 840 850 900M940 600L980 640M990 700L1060 700 1100 730 1060 780 990 770zM1050 860L1030 900M910 900L940 980 930 1060 870 1080M780 900L740 980 760 1060 830 1090 870 1060M820 1000L880 990M640 1090L620 1180 680 1240M760 1180L800 1220 820 1280 770 1340M800 1220L860 1215M700 1180L780 1180 850 1190M980 1120L960 1190 1020 1200M960 1320L980 1400 1020 1440M780 1400L740 1440 700 1440M760 1560L700 1540M860 1600L940 1640 940 1760 870 1800M1130 1840L1160 1800M1200 1900L1230 1850 1300 1800 1300 1750M1330 1900L1350 1820 1400 1800M1550 1800L1570 1850M1570 1920L1510 1900M690 1660L640 1700 650 1760M700 1700L780 1720 760 1780M780 1580L830 1600 880 1560M600 500L650 490M560 300L620 330M1140 620L1200 640M1130 690L1145 740M1120 780L1110 850',
]

const bounds = [
  'M310 288L270 289Q210 295 165 315L115 345Q90 370 70 410L55 460Q30 500 30 530T65 600 135 618L165 610Q220 615 240 598L260 573Q310 535 330 500L340 470Q370 420 358 385L345 355 345 328zM345 328L380 375 415 415 422 440 460 515 475 555 517 605 517 650 523 688 505 740 503 755 453 773Q400 755 350 765 300 715 230 715L200 720Q140 720 105 775L90 810Q50 880 85 930L127 967 90 1005Q40 1050 42 1100 50 1170 80 1190T160 1205L185 1197 225 1193 242 1235 235 1268 180 1302Q120 1310 105 1325L78 1352 15 1358M15 450L45 385 57 330 115 345',
  'M1137 9L1160 55 1168 80 1170 115 1178 142 1197 160 1207 178 1230 188 1270 200 1315 230Q1355 250 1380 285L1418 362 1440 378 1455 402Q1510 425 1515 490 1518 530 1488 560L1505 588 1545 640Q1575 675 1576 725V765L1600 815Q1625 860 1630 900M1895 990L1945 1030Q2005 1080 2011 1170L2005 1140 2010 1190 2013 1240 1997 1300 1977 1360 1970 1410Q1960 1470 1903 1505',
  'M1907 1668Q1930 1700 1927 1740L1918 1775 1958 1805 1915 1850Q1840 1890 1793 1940L1790 1975 1780 2010 1785 2100 1775 2170 1762 2225 1715 2265 1665 2273M1958 1805L1985 1800 2025 1775Q2060 1755 2090 1760L2098 1775 2155 1745 2185 1720 2225 1695 2270 1652M1790 1975Q1750 2025 1680 2013L1645 2030 1595 2045Q1560 2095 1500 2092 1440 2080 1380 2052L1295 2065 1255 2093 1205 2095Q1185 2140 1125 2155 1080 2165 1055 2148L1015 2125 975 2118 940 2143Q880 2165 840 2152 800 2195 740 2180 705 2165 690 2125L660 2098 600 2112 580 2130 575 2180 550 2225 530 2245 515 2280M203 2272L240 2260 280 2270 330 2275',
  'M2098 1775L2110 1810 2130 1840 2145 1880 2155 1915 2155 1970 2185 1980 2205 2010 2235 2020 2250 2000 2270 1995',
]
const thin = [
  'M15 250L57 330M335 300L390 260 480 165 500 115 545 95 590 92M480 768L510 800 545 825 555 850 590 880 640 920M15 1770L75 1738 150 1712 230 1735 360 1720 445 1752 555 1767 575 1740 625 1695 700 1660 718 1600M590 92L615 50 660 30 670 0',
]
const wales = 'M640 920L660 960 655 1000 700 1010 700 1040 680 1050 640 1030 590 1040 580 1080 600 1100 635 1130 610 1145 610 1180 590 1200 625 1210 600 1230 560 1255 590 1290 635 1300 625 1340 600 1345 595 1400 600 1450 635 1495 660 1485 715 1530 715 1600'

const places: Place[] = [
  { t: 'Newcastle', x: 1002, y: 26, w: 170, s: 36 }, { t: 'upon Tyne', x: 1003, y: 73, w: 176, s: 36, cx: 1002, cy: 90, big: true },
  { t: 'Carlisle', x: 641, y: 114, w: 102, cx: 642, cy: 126 }, { t: 'Sunderland', x: 1065, y: 156, w: 160, cx: 1065, cy: 120 },
  { t: 'Great Britain', x: 847, y: 307, w: 253, s: 44, cls: 'gb' }, { t: 'Isle of Man', x: 202, y: 467, w: 218, s: 39, cls: 'reg' },
  { t: 'Ripon', x: 1026, y: 471, w: 78, cx: 1026, cy: 483 }, { t: 'Lancaster', x: 678, y: 557, w: 137, cx: 678, cy: 525 },
  { t: 'York', x: 1149, y: 597, w: 60, cx: 1149, cy: 567 }, { t: 'Leeds', x: 1021, y: 626, w: 97, cx: 1020, cy: 639, big: true },
  { t: 'Preston', x: 706, y: 691, w: 106, cx: 705, cy: 657 }, { t: 'Wakefield', x: 1034, y: 728, w: 136, cx: 1035, cy: 693 },
  { t: 'Hull', x: 1350, y: 698, w: 54, cx: 1349, cy: 666 }, { t: 'Manchester', x: 830, y: 827, w: 199, cx: 830, cy: 786, big: true },
  { t: 'Sheffield', x: 1041, y: 817, w: 147, cx: 1041, cy: 831, big: true }, { t: 'Liverpool', x: 626, y: 863, w: 155, cx: 627, cy: 819, big: true },
  { t: 'Bangor', x: 316, y: 890, w: 102, cx: 315, cy: 903 }, { t: 'St Asaph', x: 502, y: 923, w: 120, cx: 504, cy: 888 }, { t: 'Lincoln', x: 1295, y: 889, w: 98, cx: 1296, cy: 900 },
  { t: 'Chester', x: 653, y: 953, w: 107, cx: 654, cy: 917 }, { t: 'Wrexham', x: 625, y: 1017, w: 133, cx: 624, cy: 984 },
  { t: 'Stoke-on-', x: 847, y: 1033, w: 133, cx: 846, cy: 999 }, { t: 'Trent', x: 847, y: 1069, w: 73 }, { t: 'Derby', x: 1040, y: 1076, w: 82 },
  { t: 'Lichfield', x: 944, y: 1136, w: 116, cx: 945, cy: 1149 }, { t: 'Birmingham', x: 927, y: 1226, w: 215, cx: 924, cy: 1239, big: true },
  { t: 'Cymru /', x: 400, y: 1247, w: 116, s: 36, cls: 'cy' }, { t: 'Wales', x: 400, y: 1286, w: 82, s: 36, cls: 'cy' },
  { t: 'Coventry', x: 1030, y: 1307, w: 125 }, { t: 'Worcester', x: 836, y: 1402, w: 142, cx: 837, cy: 1368 }, { t: 'Hereford', x: 626, y: 1440, w: 124, cx: 702, cy: 1431 },
  { t: 'St Davids', x: 9, y: 1495, w: 122 }, { t: 'Gloucester', x: 830, y: 1501, w: 150, cx: 831, cy: 1515 }, { t: 'Swansea', x: 366, y: 1610, w: 122, cx: 366, cy: 1623 },
  { t: 'Cardiff', x: 576, y: 1668, w: 113, cx: 576, cy: 1683, big: true }, { t: 'Bristol', x: 734, y: 1736, w: 106, cx: 735, cy: 1695, big: true },
  { t: 'Wells', x: 720, y: 1835, w: 72, cx: 720, cy: 1803 }, { t: 'Salisbury', x: 953, y: 1850, w: 126, cx: 954, cy: 1862 }, { t: 'Winchester', x: 1176, y: 1876, w: 157, cx: 1084, cy: 1866 },
  { t: 'Southampton', x: 1060, y: 1923, w: 192, cx: 1059, cy: 1935 }, { t: 'Portsmouth', x: 1146, y: 2008, w: 166, cx: 1146, cy: 1977 }, { t: 'Brighton', x: 1404, y: 1957, w: 122, cx: 1404, cy: 1971 },
  { t: 'Canterbury', x: 1738, y: 1806, w: 158, cx: 1737, cy: 1770 }, { t: 'Exeter', x: 480, y: 2041, w: 87, cx: 480, cy: 2010 }, { t: 'Plymouth', x: 312, y: 2148, w: 133, cx: 312, cy: 2160 },
  { t: 'Truro', x: 64, y: 2239, w: 74, cx: 63, cy: 2208 }, { t: 'Oostende', x: 2157, y: 1805, w: 133, cx: 2238, cy: 1794 }, { t: 'Dunkerque', x: 2091, y: 1865, w: 155, cx: 2091, cy: 1878 },
  { t: 'Calais', x: 1949, y: 1901, w: 80, cx: 1950, cy: 1914 }, { t: 'Lille', x: 2276, y: 2032, w: 64, s: 36 }, { t: 'as', x: 2221, y: 2183, w: 30 },
]

const tiles: [string, string][] = [
  ['1034,895 1441,908 1420,1316 1025,1302', '#7d8b8f'],
  ['1441,908 1493,911 1430,1155', '#e5b636'],
  ['1025,1302 1423,1315 1408,1748 1015,1738', '#bdcf50'],
  ['1423,1340 1470,1340 1477,1748 1795,1735 1787,1768 1408,1748', '#ff9e17'],
  ['1429,1160 1378,1352 1424,1353', '#8d5a99'],
  ['1493,906 1892,894 1899,1300 1865,1310', '#729b6f'],
  ['1493,911 1888,932 1865,1305 1462,1354 1424,1353 1429,1157', '#a57159'],
  ['1460,1314 1899,1300 1907,1736 1477,1748', '#7d8b8f'],
]

const dock: { svg: string; dots: number; active?: boolean }[] = [
  { dots: 0, svg: '<rect x="3" y="3" width="42" height="41" rx="3" fill="#2e8d99"/><rect x="3" y="2" width="42" height="40" rx="3" fill="#48b9c7"/><path d="M6 5h20v15H6zM29 8h13v9H29zM14 23h20v15H14z" fill="#f2f2f2"/><path d="M6 5h20v4H6zM29 8h13v3H29zM14 23h20v5H14z" fill="#ffad00"/>' },
  { dots: 0, svg: '<g transform="translate(4 2)"><rect width="11" height="11" rx="2" fill="#48b9c7"/><rect x="14.500" width="11" height="11" rx="2" fill="#fbe366"/><rect x="29" width="11" height="11" rx="2" fill="#48b9c7"/><rect y="14.500" width="11" height="11" rx="2" fill="#fbe366"/><rect x="14.500" y="14.500" width="11" height="11" rx="2" fill="#94ebeb"/><rect x="29" y="14.500" width="11" height="11" rx="2" fill="#ffad00"/><rect y="29" width="11" height="11" rx="2" fill="#94ebeb"/><rect x="14.500" y="29" width="11" height="11" rx="2" fill="#48b9c7"/><rect x="29" y="29" width="11" height="11" rx="2" fill="#fbe366"/></g>' },
  { dots: 0, svg: '<rect x="4" y="4" width="40" height="39" rx="2" fill="#505050"/><rect x="4" y="2" width="40" height="39" rx="2" fill="#cfcfcf"/><path d="M21 9h6l1 4 3 1.500 4-1.500 3 5-3 3v3l3 3-3 5-4-1.500L28 32l-1 4h-6l-1-4-3-1.500-4 1.500-3-5 3-3v-3l-3-3 3-5 4 1.500 3-1.500z" fill="#453f38"/><circle cx="24" cy="22" r="4" fill="#cfcfcf"/>' },
  { dots: 0, svg: '<path d="M4 12V4q0-2 2-2h12l4 4h20q2 0 2 3v4z" fill="#48b9c7"/><rect x="3" y="9" width="42" height="36" rx="3" fill="#5a5a5a"/><rect x="3" y="8" width="42" height="34" rx="3" fill="#aaa"/><path d="M16 15h16v7H16z" fill="#777"/><path d="M17 16h14v4H17z" fill="#fff"/>' },
  { dots: 1, svg: '<rect x="3" y="9" width="42" height="33" rx="3" fill="#c8c8c8"/><rect x="5" y="11" width="38" height="28" rx="1" fill="#3a3a3a"/><text x="10" y="22" font-family="DejaVu Sans Mono" font-size="10" fill="#fff">$_</text>' },
  { dots: 0, svg: '<rect x="0" y="-2" width="48" height="48" rx="12" fill="url(#jg)"/><path d="M24 4h14v6h-3q-1 0-1 2v15c0 10-12 14-18 10s-6-15 2-17q4-1 6 0v6c-5-1-7 1-7 4 0 5 10 6 10-2V12q0-2-2-2h-1z" fill="#fff"/>' },
  { dots: 2, svg: '<circle cx="24" cy="22" r="24" fill="#fbc116"/><path d="M24 10h20.800A24 24 0 003.200 10L13.600 28z" fill="#e33b2e"/><path d="M3.200 10A24 24 0 0024 46L34.400 28H13.600z" fill="#259c49"/><path d="M24 46A24 24 0 0044.800 10H24l10.400 18z" fill="#fbc116"/><circle cx="24" cy="22" r="12" fill="#fff"/><circle cx="24" cy="22" r="9.500" fill="#1a73e8"/>' },
  { dots: 1, svg: '<path d="M34 31L8.500 12 6.500 12 3.500 15v2L34 43z" fill="#1280c9"/><path d="M34 1L3.500 28v2l3 3h2L34 13z" fill="#0d6fb5"/><path d="M34 1l10.500 5v33L34 43l-3-2.500V4z" fill="#2ba5ef"/>' },
  { dots: 0, svg: '<rect x="3" y="8" width="42" height="34" rx="3" fill="#d8d4d0"/><rect x="4" y="8" width="40" height="30" rx="2" fill="#f0f0f0"/><rect x="6" y="10" width="36" height="26" fill="#3b4a78"/><rect x="7" y="11" width="34" height="25" fill="url(#cg)"/><path d="M9 15v-2h3M39 15v-2h-3M9 32v2h3M39 32v2h-3" stroke="#fff" fill="none"/><path d="M19 20h3l1-2h3l1 2h3v8H19z" fill="#fff"/><circle cx="24.500" cy="24" r="2.300" fill="#4b9ad0"/>' },
  { dots: 2, active: true, svg: '<circle cx="24" cy="22" r="18.500" fill="none" stroke="#73a42c" stroke-width="8.500"/><path d="M20 18h8l4 4-4 6-8-5z" fill="#f07f1e"/><path d="M27 27l6-4L47 42l-10 1z" fill="#8ebf4a"/><path d="M26 26l5-5 6 8-5 4z" fill="#fad96b"/><path d="M37 30l10 12-7 2z" fill="#549830"/>' },
]

const selectedLayer = 0
</script>

<template>
  <div class="desktop">
    <header class="topbar">
      <nav class="tb-left"><span class="ws">Workspaces</span><span class="ap">Applications</span></nav>
      <span class="clock">4 Dec&nbsp; 18:38</span>
      <div class="tray">
        <svg width="16" height="12" viewBox="0 0 16 12" class="t1"><path d="M0 0h7v12H0zM9 0h7v5H9zM9 7h7v5H9z" fill="#ddd" /></svg>
        <svg width="16" height="16" viewBox="0 0 16 16"><path d="M8 0v16M0 8h16M2.500 2.500l11 11M13.500 2.500l-11 11" stroke="#ddd" stroke-width="2.200" /><circle cx="8" cy="8" r="5" fill="#ddd" /><path d="M10 5a3.500 3.500 0 10 1 5q-4 0-1-5z" fill="#222" /></svg>
        <svg width="16" height="14" viewBox="0 0 16 14"><path d="M8 14L0 4q8-7 16 0z" fill="#666" /><path d="M8 14L2 6q6-4 12 0z" fill="#e2e2e2" /></svg>
        <svg width="18" height="14" viewBox="0 0 18 14"><path d="M0 4h3l6-4v14L3 10H0z" fill="#ddd" /><path d="M11 4q2 3 0 6" stroke="#ddd" stroke-width="1.500" fill="none" /><path d="M13.500 2q4 5 0 10" stroke="#666" stroke-width="1.500" fill="none" /></svg>
        <svg width="14" height="14" viewBox="0 0 14 14"><path d="M4 2.500a5.500 5.500 0 106 0M7 0v7" stroke="#ddd" stroke-width="1.600" fill="none" /></svg>
      </div>
    </header>

    <main class="space">
      <div class="scraps"><i class="s1" /><i class="s2" /><i class="s3" /></div>

      <section class="win qgis">
        <div class="title qt"><b>*Untitled Project — QGIS</b></div>
        <div class="menubar">
          <span v-for="(m, i) in menus" :key="i">{{ m[0] }}<u>{{ m[1] }}</u>{{ m[2] }}</span>
        </div>
        <div v-for="(bar, bi) in toolbars" :key="bi" class="toolbar">
          <template v-for="(t, ti) in bar" :key="ti">
            <span v-if="t.k === 'handle'" class="handle" :class="{ first: ti === 0 }" />
            <span v-else-if="t.k === 'arrow'" class="darr" :class="{ off: t.off }" />
            <span v-else-if="t.k === 'sep'" class="sep" />
            <span v-else class="tool" :class="{ on: t.on }">
              <svg viewBox="0 0 24 24" width="24" height="24" :class="{ off: t.off }" v-html="icons[t.n!]" />
            </span>
          </template>
        </div>

        <div class="body">
          <aside class="side">
            <div class="phead ph1"><span>Browser</span><i class="pbtn"><svg viewBox="0 0 11 11"><rect x="3.500" y="1.500" width="6" height="5" /><rect x="1.500" y="4" width="5.500" height="5.500" /></svg></i><i class="pbtn"><svg viewBox="0 0 11 11"><path d="M2 2l7 7M9 2l-7 7" stroke-width="2.200" /></svg></i></div>
            <div class="ptools">
              <svg v-for="n in ['addl', 'refresh', 'filter', 'collapse', 'info']" :key="n" viewBox="0 0 24 24" width="15" height="15" v-html="icons[n]" />
            </div>
            <div class="box b1">
              <div class="brow">
                <div class="tree">
                  <div v-for="r in tree" :key="r.t" class="trow">
                    <i class="exp" :class="{ show: r.e }" />
                    <svg viewBox="0 0 24 24" width="16" height="16" v-html="icons[r.i]" /><span>{{ r.t }}</span>
                  </div>
                </div>
                <div class="vsb"><i class="cap up" /><i class="thumb" style="flex: 239" /><i style="flex: 45" /><i class="cap dn" /></div>
              </div>
              <div class="hsb"><i class="cap lf" /><i class="thumb" style="flex: 140" /><i style="flex: 18" /><i class="cap rt" /><i class="corner" /></div>
            </div>
            <div class="split" />
            <div class="phead ph2"><span>Layers</span><i class="pbtn"><svg viewBox="0 0 11 11"><rect x="3.500" y="1.500" width="6" height="5" /><rect x="1.500" y="4" width="5.500" height="5.500" /></svg></i><i class="pbtn"><svg viewBox="0 0 11 11"><path d="M2 2l7 7M9 2l-7 7" stroke-width="2.200" /></svg></i></div>
            <div class="ptools lt">
              <svg v-for="n in ['brush', 'group', 'eye', 'filterd', 'eps']" :key="n" viewBox="0 0 24 24" width="16" height="16" v-html="icons[n]" />
              <i class="darr" />
              <svg viewBox="0 0 24 24" width="16" height="16" v-html="icons.expand" />
              <span class="more">»</span>
            </div>
            <div class="box b2">
              <div class="layers">
                <div v-for="(c, i) in layers" :key="i" class="lrow" :class="{ sel: i === selectedLayer }">
                  <i class="exp" />
                  <i class="chk"><svg viewBox="0 0 12 12"><path d="M2 6l2.600 4L9.500 1.500" /></svg></i>
                  <i class="sw" :style="{ background: c }" />
                  <b>neodc.sentinel_ard.data</b>
                  <i class="badge"><svg viewBox="0 0 18 16"><path d="M4.500 2v12M7.500 2v12M10.500 2v12M13.500 2v12" stroke="#888" /><rect x="2.500" y="4.500" width="13" height="7" rx="1.500" fill="#f2f2f2" stroke="#888" stroke-width="1.300" /></svg></i>
                </div>
                <div class="lrow">
                  <i class="exp open" />
                  <i class="chk"><svg viewBox="0 0 12 12"><path d="M2 6l2.600 4L9.500 1.500" /></svg></i>
                  <svg class="osm" viewBox="0 0 12 12"><path d="M0 0h12v12H0z" fill="#a9c0e0" /><path d="M0 0h4v4H0zM8 0h4v3H8zM4 4h4v4H4zM0 9h4v3H0zM9 8h3v4H9z" fill="#26364d" /><path d="M4 0h4v3H4zM0 4h3v4H0zM9 4h3v3H9z" fill="#d5e1f2" /></svg>
                  <b>OpenStreetMap</b>
                </div>
              </div>
              <div class="hsb"><i class="cap lf" /><i class="thumb" style="flex: 32" /><i style="flex: 140" /><i class="cap rt" /></div>
            </div>
          </aside>
          <div class="grip" />
          <svg class="map" viewBox="21 9 2241 2265" preserveAspectRatio="none">
            <defs>
              <clipPath id="lc"><path :d="land" /></clipPath>
              <filter id="rough" x="0" y="0" width="100%" height="100%"><feTurbulence type="fractalNoise" baseFrequency=".06" numOctaves="3" seed="4" /><feDisplacementMap in="SourceGraphic" scale="18" xChannelSelector="R" yChannelSelector="G" /></filter>
              <filter id="wind" x="0" y="0" width="100%" height="100%"><feTurbulence type="fractalNoise" baseFrequency=".014" numOctaves="2" seed="6" /><feDisplacementMap in="SourceGraphic" scale="34" xChannelSelector="R" yChannelSelector="G" /></filter>
              <filter id="ragged" x="0" y="0" width="100%" height="100%"><feTurbulence type="fractalNoise" baseFrequency=".03" numOctaves="4" seed="9" /><feDisplacementMap in="SourceGraphic" scale="90" xChannelSelector="R" yChannelSelector="G" /></filter>
              <filter id="farm" x="0" y="0" width="100%" height="100%" color-interpolation-filters="sRGB"><feTurbulence type="fractalNoise" baseFrequency=".006" numOctaves="5" seed="3" /><feColorMatrix values="0 0 0 0 .937  0 0 0 0 .949  0 0 0 0 .867  9 0 0 0 -4.300" /></filter>
              <filter id="spk" x="0" y="0" width="100%" height="100%" color-interpolation-filters="sRGB"><feTurbulence type="fractalNoise" baseFrequency=".045" numOctaves="4" seed="12" /><feColorMatrix values="0 0 0 0 .8  0 0 0 0 .88  0 0 0 0 .73  10 0 0 0 -6.400" /></filter>
            </defs>
            <rect width="2300" height="2300" fill="#aad3df" />
            <g filter="url(#rough)"><path :d="land" fill="#f2efe9" /></g>
            <g clip-path="url(#lc)">
              <rect width="2300" height="2300" filter="url(#farm)" />
              <g filter="url(#ragged)"><path :d="hills" fill="#dde1b7" /><path :d="woods" fill="#bfdcb3" /><path :d="fields" fill="#d8edc4" /></g>
              <rect width="2300" height="2300" filter="url(#spk)" />
            </g>
            <g fill="none" stroke-linejoin="round" stroke-linecap="round">
              <g filter="url(#wind)">
                <path v-for="(r, i) in roads" :key="i" :d="r" stroke="#f9ae9c" stroke-width="3.800" />
                <path v-for="(r, i) in motorways" :key="i" :d="r" stroke="#e8789a" stroke-width="5" />
                <path :d="wales" stroke="#b3a3bd" stroke-width="5" />
              </g>
              <path v-for="(r, i) in bounds" :key="i" :d="r" stroke="#9f97b5" stroke-width="6" />
              <path v-for="(r, i) in thin" :key="i" :d="r" stroke="#9f9fbd" stroke-width="3" />
            </g>
            <template v-for="p in places" :key="p.t">
              <circle v-if="p.cx" :cx="p.cx" :cy="p.cy" :r="p.big ? 8 : 5.500" fill="#fff" stroke="#555" stroke-width="2.600" />
            </template>
            <text v-for="p in places" :key="p.t" :x="p.x - p.w / 2" :y="p.y" :font-size="p.s ?? (p.big ? 38 : 31)" :textLength="p.w" lengthAdjust="spacingAndGlyphs" :class="p.cls">{{ p.t }}</text>
            <polygon v-for="(t, i) in tiles" :key="i" :points="t[0]" :fill="t[1]" stroke="#232323" stroke-width="3" />
          </svg>
        </div>

        <footer class="status">
          <div class="locate"><svg viewBox="0 0 14 14" width="14" height="14"><circle cx="5.500" cy="5.500" r="4" fill="none" stroke="#888" stroke-width="1.400" /><path d="M8.500 8.500l4 4.500" stroke="#888" stroke-width="2" /></svg>Type to locate (Ctrl+K)</div>
          <span class="lg">13 legend</span>
          <span class="co">Coordinate</span>
          <div class="in cbox">54°, 2°</div>
          <svg class="mouse" viewBox="0 0 16 18" width="16" height="18"><path d="M4 1q-4 2-1 6l4 6q4 4 7 0 1-3-1-5L8 2Q6-1 4 1z" fill="#777" stroke="#222" /><path d="M1 8l10-7M2 12L13 4M5 15L15 7" stroke="#222" stroke-width="1.300" /><path d="M3 9l9-5" stroke="#fff" /></svg>
          <span class="sc">Scale</span>
          <div class="in combo"><span>1:4624876</span><i><em class="dn2" /></i></div>
          <svg class="lock" viewBox="0 0 14 16" width="14" height="16"><path d="M3 8V5a4 4 0 018 0v3" fill="none" stroke="#999" stroke-width="1.800" /><rect x="1" y="7.500" width="12" height="8" rx="1" fill="#5c5c5c" /></svg>
          <span class="mg">Magnifier</span>
          <div class="in spin"><span>100%</span><i><em class="up2" /><em class="dn2" /></i></div>
          <span class="ro">Rotation</span>
          <div class="in spin"><span>0.0 °</span><i><em class="up2" /><em class="dn2" /></i></div>
          <i class="chk rc"><svg viewBox="0 0 12 12"><path d="M2 6l2.600 4L9.500 1.500" /></svg></i>
        </footer>
      </section>

      <section class="win stac">
        <div class="title st"><b>STAC API Browser</b><i class="min" /><i class="close"><svg viewBox="0 0 10 10" width="10" height="10"><path d="M1.500 1.500l7 7M8.500 1.500l-7 7" stroke="#fff" stroke-width="2.200" /></svg></i></div>
        <div class="content">
          <div class="tabs"><span class="tab ta">Search</span><span class="tab tb act">Results</span><span class="tab tc">Settings</span></div>
          <div class="pane">
            <div class="filter"><label>Filter</label><div class="fin" /></div>
            <p class="disp">Displaying page 1 of results, 10 item(s)</p>
            <div class="list">
              <div class="cards">
                <article v-for="r in results" :key="r" class="card">
                  <h2>neodc.sentinel_ard.data.sentinel_2.2023.06.25.S2B_20230625_{{ r }}_ORB</h2>
                  <h3>sentinel 2 ARD</h3>
                  <p><span>Date acquired:</span><span>06/25/2023</span></p>
                  <div class="act-row"><i class="cb" /><span>Select footprint</span><button class="btn va">View assets</button></div>
                </article>
              </div>
              <div class="vsb big"><i class="cap up" /><i class="thumb" style="flex: 229" /><i style="flex: 472" /><i class="cap dn" /></div>
            </div>
            <div class="r1"><button class="btn dis w1">Add the selected footprints</button><button class="btn w2">Add all footprints</button></div>
            <div class="r2"><button class="btn w3">Clear</button><i class="sp" /><button class="btn dis w3">Previous</button><button class="btn w3">Next</button></div>
          </div>
          <i class="szgrip" />
        </div>
      </section>
    </main>

    <footer class="dock">
      <svg width="0" height="0" class="defs"><defs><linearGradient id="jg" x1="0" y1="0" x2="1" y2="1"><stop offset="0" stop-color="#1f93f5" /><stop offset="1" stop-color="#0551b5" /></linearGradient><linearGradient id="cg" x1="0" y1="0" x2="1" y2="1"><stop offset="0" stop-color="#49b4b8" /><stop offset="1" stop-color="#4c86d6" /></linearGradient></defs></svg>
      <div v-for="(d, i) in dock" :key="i" class="slot" :class="{ active: d.active }">
        <svg viewBox="0 -2 48 48" width="48" height="48" v-html="d.svg" />
        <span class="dots"><i v-for="k in d.dots" :key="k" /></span>
      </div>
      <i class="dsep" />
      <div class="slot">
        <svg viewBox="0 -2 48 48" width="48" height="48"><path d="M7 1q0-1 2-1h20l11 13v29q0 2-2 2H9q-2 0-2-2z" fill="#eee" /><path d="M28 0l12 13H30q-2 0-2-2z" fill="#fff" stroke="#bbb" /><path d="M12 21h21M12 26h21M12 31h15M12 36h10M12 40h8" stroke="#666" stroke-width="1.500" /><path d="M21 43l2-7 16-19 6 4-17 19z" fill="#f2c530" stroke="#a88212" /><path d="M39 17l3-2q3 0 4 3l-2 3z" fill="#ee9a86" /><path d="M21 43l1-3 3 2z" fill="#333" /></svg>
        <span class="dots"><i /></span>
      </div>
    </footer>
  </div>
</template>

<style>
body { margin: 0; overflow: hidden; background: #2f2b2f; }
</style>

<style scoped>
* { box-sizing: border-box; }
i, em { font-style: normal; display: block; flex: none; }
svg { display: block; flex: none; }
.desktop { width: 1920px; height: 1080px; display: flex; flex-direction: column; background: #302c31; font: 13px/16px "DejaVu Sans", sans-serif; color: #111; overflow: hidden; }
.topbar { height: 32px; flex: none; background: #222021; color: #d9d8d6; display: flex; align-items: center; justify-content: space-between; font: 600 14px/32px "Noto Sans", "Open Sans", sans-serif; }
.tb-left { display: flex; gap: 24px; width: 801px; padding-left: 12px; }
.ws { width: 81px; letter-spacing: -.05px; }
.clock { width: 80px; white-space: nowrap; letter-spacing: -.05px; }
.tray { width: 799px; display: flex; justify-content: flex-end; align-items: center; padding-right: 17px; gap: 12px; }
.t1 { margin-right: 26px; }
.space { height: 972px; flex: none; position: relative; }
.scraps { position: absolute; left: 0; top: 966px; width: 1920px; height: 6px; overflow: hidden; }
.scraps i { position: absolute; top: 0; height: 6px; }
.s1 { left: 646px; width: 9px; background: #dcb90c; }
.s2 { left: 678px; width: 9px; background: #2aa8d8; }
.s3 { left: 742px; width: 32px; background: #dcb90c; border-radius: 0 0 16px 16px; }
.win { position: absolute; display: flex; flex-direction: column; background: #efefef; }
.qgis { left: 4px; top: 4px; width: 956px; height: 964px; box-shadow: 0 0 3px #111; border-radius: 4px 4px 0 0; overflow: hidden; }
.title { height: 37px; flex: none; background: #574f4a; border-top: 1px solid #6b635e; border-bottom: 1px solid #2a2627; color: #f2f1ef; display: flex; align-items: center; justify-content: center; border-radius: 4px 4px 0 0; }
.title b { font: 600 14px/20px "Noto Sans", sans-serif; white-space: nowrap; transform: scaleX(.875); padding-bottom: 2px; }
.qt { width: 1160px; }
.menubar { height: 22px; flex: none; display: flex; gap: 14.700px; padding-left: 10.200px; border-bottom: 1px solid #d5d5d5; line-height: 21px; }
.menubar u { text-underline-offset: 2px; }
.toolbar { height: 39px; flex: none; display: flex; align-items: center; background: linear-gradient(#fafafa, #ececec); border-bottom: 1px solid #bdbdbd; overflow: hidden; }
.tool { width: 33px; height: 31px; flex: none; display: flex; align-items: center; justify-content: center; border: 1px solid transparent; }
.tool.on { background: #dadada; border-color: #a9a9a9; border-radius: 2px; }
svg.off { opacity: .38; filter: grayscale(.5); }
.handle { width: 16px; flex: none; height: 17px; background: radial-gradient(circle at 1px 1px, #b0b0b0 .8px, transparent 1px) 5px 0 / 3px 3px; background-clip: content-box; padding: 0 6px 0 5px; }
.handle.first { width: 12.500px; padding: 0 3px 0 5px; }
.darr { width: 12px; flex: none; display: flex; justify-content: center; }
.darr::before { content: ""; border: 4px solid transparent; border-top: 4.500px solid #555; border-bottom: 0; margin-left: -2px; }
.darr.off { opacity: .35; }
.sep { width: 7px; flex: none; height: 19px; border-left: 1px solid #ccc; margin-left: 6px; margin-right: -6px; }
.body { height: 757px; flex: none; display: flex; }
.side { width: 201px; flex: none; display: flex; flex-direction: column; }
.phead { display: flex; align-items: center; gap: 3px; padding: 0 2px 0 4px; flex: none; height: 18px; }
.phead span { flex: 1; }
.ph1 { margin-top: 1px; }
.pbtn { width: 11px; height: 11px; border: 1px solid #777; border-radius: 2px; }
.pbtn svg { width: 9px; height: 9px; fill: none; stroke: #555; }
.ptools { height: 30px; flex: none; display: flex; align-items: center; gap: 10px; padding-left: 8px; }
.box { border: 1px solid #a8a8a8; background: #fff; display: flex; flex-direction: column; overflow: hidden; }
.b1 { height: 327px; flex: none; }
.brow { height: 311px; flex: none; display: flex; }
.tree { flex: 1; overflow: hidden; padding-top: 1px; }
.trow { height: 19px; display: flex; align-items: center; white-space: nowrap; padding-left: 6px; }
.trow span { margin-left: 6px; }
.trow .exp { width: 13px; }
.exp.show::before { content: ""; display: block; width: 0; border: 4px solid transparent; border-left: 4px solid #444; border-right: 0; }
.vsb { width: 14px; flex: none; display: flex; flex-direction: column; background: #e4e4e4; border-left: 1px solid #b4b4b4; }
.vsb i { flex: none; }
.thumb { background: linear-gradient(90deg, #fdfdfd, #efefef); }
.vsb .thumb { border-top: 1px solid #b4b4b4; border-bottom: 1px solid #b4b4b4; }
.cap { width: 14px; height: 14px; background: #f7f7f7; display: flex; align-items: center; justify-content: center; }
.vsb .cap { width: 13px; }
.cap::before { content: ""; border: 4px solid transparent; }
.up::before { border-bottom: 4px solid #444; border-top: 0; }
.dn::before { border-top: 4px solid #444; border-bottom: 0; }
.dn { border-top: 1px solid #b4b4b4; }
.lf::before { border-right: 4px solid #444; border-left: 0; }
.rt::before { border-left: 4px solid #444; border-right: 0; }
.rt { border-left: 1px solid #b4b4b4; }
.hsb { height: 14px; flex: none; display: flex; background: #e4e4e4; border-top: 1px solid #b4b4b4; }
.hsb .thumb { border-left: 1px solid #b4b4b4; border-right: 1px solid #b4b4b4; background: linear-gradient(#fdfdfd, #efefef); }
.corner { width: 14px; background: #efefef; border-left: 1px solid #b4b4b4; }
.split { height: 7px; flex: none; margin: 0 92px; background: radial-gradient(circle at 1px 1px, #bbb .6px, transparent 1px) 0 2px / 3px 3px repeat-x; }
.ph2 { height: 19px; padding-top: 1px; }
.lt { height: 31px; gap: 9.200px; padding-left: 7px; }
.lt .darr { margin: 0 -3px; }
.more { font-size: 15px; margin-left: 15px; color: #555; }
.b2 { height: 324px; flex: none; }
.layers { flex: 1; }
.lrow { height: 19px; display: flex; align-items: center; white-space: nowrap; overflow: hidden; position: relative; padding-left: 6px; }
.lrow b { margin-left: 6px; }
.lrow .exp { width: 17px; }
.lrow .sw { width: 16px; height: 16px; margin-left: 6px; border: 1px solid rgba(40, 40, 40, .55); }
.exp.open::before { content: ""; display: block; width: 0; border: 4px solid transparent; border-top: 4px solid #555; border-bottom: 0; }
.osm { width: 14px; height: 14px; margin: 0 0 0 8px; }
.chk { width: 14px; height: 14px; background: #fff; border: 1px solid #aaa; }
.chk svg { width: 12px; height: 12px; fill: none; stroke: #000; stroke-width: 2; }
.sel { background: #308cc6; color: #fff; }
.sel b { text-decoration: underline; }
.badge { position: absolute; left: 177px; top: 1px; width: 18px; height: 17px; background: #ececec; border-radius: 2px; opacity: .95; }
.grip { width: 7px; flex: none; border-right: 1px solid #b5b5b5; background: radial-gradient(circle at 1px 1px, #aaa .7px, transparent 1px) 3px 370px / 3px 3px no-repeat; }
.map { width: 747px; height: 755px; margin-top: 1px; border: 0; }
.map text { font-family: "Noto Sans", sans-serif; fill: #3a3a3a; paint-order: stroke; stroke: #fff; stroke-opacity: .75; stroke-width: 6px; stroke-linejoin: round; }
.map text.gb { fill: #111; font-style: italic; }
.map text.reg { fill: #6f4f7c; }
.map text.cy { fill: #8d6c9b; font-style: italic; }
.status { flex: 1; display: flex; align-items: center; font-size: 11px; padding: 2px 0 2px 4px; border-top: 1px solid #bbb; overflow: hidden; white-space: nowrap; }
.status > * { flex: none; }
.locate { width: 270px; height: 25px; border: 1px solid #999; border-radius: 3px; background: #fff; display: flex; align-items: center; gap: 6px; padding-left: 8px; font-size: 13px; color: #777; }
.lg { width: 24px; margin-left: 8px; overflow: hidden; }
.co { margin-left: 7px; width: 63px; }
.in { height: 25px; background: #fff; border: 1px solid #aaa; border-radius: 3px; display: flex; align-items: center; }
.cbox { width: 60px; height: 22px; justify-content: center; }
.mouse { margin-left: 4px; }
.sc { margin-left: 12px; width: 32px; }
.combo { width: 97px; padding-left: 3px; }
.in > span { flex: 1; }
.in > i { width: 21px; height: 23px; border-left: 1px solid #aaa; display: flex; flex-direction: column; justify-content: center; align-items: center; background: linear-gradient(#fdfdfd, #efefef); }
.in.spin > i { width: 14px; gap: 6px; }
.dn2 { border: 4px solid transparent; border-top-color: #555; border-bottom: 0; }
.up2 { border: 4px solid transparent; border-bottom-color: #555; border-top: 0; }
.lock { margin-left: 11px; }
.mg { margin-left: 8px; width: 54px; }
.spin { width: 94px; padding-left: 4px; }
.ro { margin-left: 8px; width: 54px; }
.rc { margin-left: 6px; }

.stac { left: 959px; top: 1px; width: 959px; height: 970px; border: 3px solid #5a0f93; border-radius: 3px; box-shadow: 0 0 14px 2px rgba(0, 0, 0, .4); }
.st { position: relative; }
.min { position: absolute; right: 47px; top: 19px; width: 8px; height: 2px; background: #fff; }
.close { position: absolute; right: 8px; top: 7px; width: 19px; height: 19px; border-radius: 50%; background: #f58e2c; display: flex; align-items: center; justify-content: center; }
.content { flex: 1; padding: 9px 8px 24px 9px; display: flex; flex-direction: column; position: relative; }
.tabs { height: 28px; flex: none; display: flex; align-items: flex-end; margin-bottom: -1px; z-index: 1; }
.tab { height: 25px; background: #e6e6e6; border: 1px solid #b4b4b4; border-bottom: 0; margin-bottom: 1px; text-align: center; line-height: 25px; border-radius: 2px 2px 0 0; }
.ta { width: 69px; border-right: 0; padding-right: 1px; }
.tb { width: 71px; }
.tc { width: 78px; border-left: 0; }
.act { height: 28px; margin-bottom: 0; background: #fbfbfb; line-height: 27px; }
.pane { flex: 1; background: #fbfbfb; border: 1px solid #b0b0b0; padding: 10px 10px 9px; display: flex; flex-direction: column; }
.filter { display: flex; align-items: center; gap: 8px; height: 25px; flex: none; }
.fin { width: 417px; height: 25px; background: #fff; border: 1px solid #a8a8a8; border-radius: 3px; }
.disp { margin: 7px 0 6px; line-height: 16px; flex: none; }
.list { height: 731px; flex: none; border: 1px solid #a8a8a8; background: #fff; display: flex; overflow: hidden; }
.cards { flex: 1; overflow: hidden; padding: 1px 0 0 1px; min-width: 0; }
.card { height: 220px; margin-bottom: 1px; border: 1px solid #b8b8b8; border-right: 0; padding: 8px 0 9px 9px; white-space: nowrap; display: flex; flex-direction: column; overflow: hidden; }
.card h2 { font: bold 17px/22px "DejaVu Sans", sans-serif; margin: 0; color: #000; }
.card h3 { font: 15px/20px "DejaVu Sans", sans-serif; margin: 5px 0 6px; }
.card p { margin: 0; display: flex; gap: 6px; font-size: 13px; }
.act-row { margin-top: auto; display: flex; align-items: center; height: 25px; flex: none; }
.cb { width: 14px; height: 14px; border: 1px solid #bbb; background: #fff; margin-right: 5px; }
.btn { height: 25px; border: 1px solid #a9a9a9; border-radius: 3px; background: linear-gradient(#fff, #ececec); font: 13px/16px "DejaVu Sans", sans-serif; padding: 0; color: #111; white-space: nowrap; }
.va { width: 85px; }
.act-row span { width: 105px; }
.act-row .va { margin-left: 8px; }
.dis { color: #bdbdbd; border-color: #c4c4c4; background: linear-gradient(#f8f8f8, #efefef); }
.big { width: 14px; }
.r1 { display: flex; gap: 6px; margin-top: 6px; flex: none; }
.r2 { display: flex; gap: 6px; margin-top: 6px; flex: none; }
.w1 { width: 185px; } .w2 { width: 120px; } .w3 { width: 80px; }
.sp { flex: 1; }
.szgrip { position: absolute; right: 2px; bottom: 2px; width: 11px; height: 11px; background: radial-gradient(circle at 1px 1px, #aaa .7px, transparent 1px) 0 0 / 3px 3px; clip-path: polygon(100% 0, 100% 100%, 0 100%); }

.dock { height: 76px; flex: none; background: #34302f; display: flex; justify-content: center; align-items: stretch; padding-right: 2px; }
.defs { position: absolute; }
.slot { width: 76px; display: flex; flex-direction: column; align-items: center; padding-top: 14px; border-radius: 14px; }
.slot.active { background: #555351; }
.dots { display: flex; gap: 4px; margin-top: 4px; }
.dots i { width: 7px; height: 7px; border-radius: 50%; background: #f2f2f2; }
.dsep { width: 1px; margin: 14px 4px; background: #777; }
</style>
